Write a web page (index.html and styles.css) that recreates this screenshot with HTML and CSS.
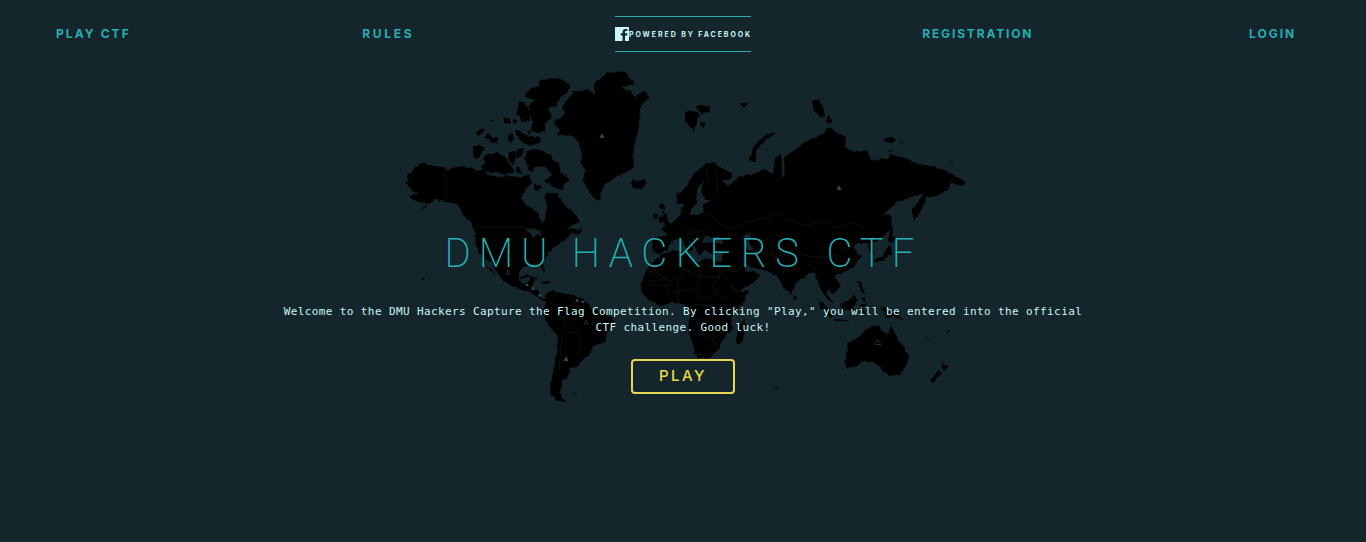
FILE: index.html
```html
<!DOCTYPE html>
<html lang="en">
<head>
<meta charset="utf-8">
<title>DMU Hackers CTF</title>
<link rel="stylesheet" href="styles.css">
</head>
<body>
<div class="page">
  <nav class="nav">
    <a class="nav-link nav-play">Play CTF</a>
    <a class="nav-link nav-rules">Rules</a>
    <a class="brand">
      <svg class="brand-icon" viewBox="0 0 14 14"><path fill="#c9f7f5" d="M0 0h14v14H0z"/><path fill="#14252b" d="M7.600 14V8.500H5.800V6.200h1.800V5C7.600 3 8.800 2 10.600 2h1.800v2.100h-1.200c-.9 0-1.200.4-1.200 1.100v1h2.400l-.3 2.300H10V14z"/></svg>
      <span class="brand-text">Powered by Facebook</span>
    </a>
    <a class="nav-link nav-reg">Registration</a>
    <a class="nav-link nav-login">Login</a>
  </nav>
  <main class="hero">
    <svg class="map" viewBox="396 64 580 346">
      <defs>
        <filter id="coast" x="-2%" y="-2%" width="104%" height="104%" color-interpolation-filters="sRGB">
          <feTurbulence type="fractalNoise" baseFrequency=".2" numOctaves="2" seed="4" result="n"/>
          <feDisplacementMap in="SourceGraphic" in2="n" scale="3.500" xChannelSelector="R" yChannelSelector="G"/>
        </filter>
      </defs>
      <g class="land" filter="url(#coast)">
        <!-- North and Central America -->
        <path d="M405 183l4-3-2-5 4-3 4-5 7-4 6 2 8 1 7 2 7 2 5-3 8-1 9 2 5 3 7 0 5 4 9 2 11-1 11 1 9-3 3 9-6 5-4 7 1 8 7 4 8 6 3 9 4-2 2-13-2-12 3-3 8 1 4 6 5 6 9 8 6 9-8 3-8 5 8-2 6 2 5-2-4 6-7-1-6 6-8 6-7 5-3 4-5 7 2 9-2 2-3-6-8-1-9 2-4 5v8l3 4 6-1 2-5 5-1-2 8-2 4 7 2 1 6 6 2 6 3-8-1-7-5-10-5-12-4-10-6-7-9-6-9-8-6 8 13 5 6-5-4-7-11-4-7-4-8-1-14-5-10-6-6-5-11-12-4-13-2-10 9-12 9 9-7 6-7-10-1-8-5 8-4-5-3z"/>
        <!-- Canadian Arctic -->
        <path d="M526 93l5-4 8-3 1-6 10-2 11 1 9 6-3 8-7 4-3 9-8 3 3 9-7 5v9l-8 1-6-3 2-9-3-7-1-10 6-4-8-2zM519 101l6 2 3 5 3 5-2 8-6 1-6-10zM475 134l7-6 3 2-6 6zM483 138l5-4 5 3 6 0v5l-6 1-3-3zM503 117l7 2v5l-5-1zM507 136l5-3 2 6-3 4-4-4zM515 130l7 3 7 3h9l4 4-4 4-11 1-7-5-3-6zM513 119l3 1v4l-4-1zM491 119h3v2h-4zM473 147l6-2 6 3-3 6-6 6-3-5zM483 157l5-3 10-1 6 4 5 5 5 9-8 4-11-3-12-1-2-4 5-4zM509 152l6-1 1 7-3 7-5-7zM517 149l7-1-2 8-5 3-1-6zM528 151l6-2 7 1 5 3 6 2 2 6 5 3 1 7 6 5 4 5-5 1-2 8-8-2-7-5-6-2 7-2 2-5-4-6-8-3-6 3-5-2-4-8zM517 167l3 0 1 7-4-2zM534 184l6 1 1 4-7 1zM529 166l5 3-1 4-5-4zM527 130l4 2-2 3z"/>
        <!-- Greenland and Iceland -->
        <path d="M553 122L565 114L562 107L573 92L587 89L595 95L594 84L607 73L625 72L635 84L620 88L632 91L634 97L645 91L649 97L640 107L639 127L634 147L633 163L635 167L616 177L604 185L600 200L592 197L583 180L585 170L580 160L583 156L578 141L572 136L557 135L560 130zM630 183l3-4 5 2 7-2 2 5-6 5-7-1z"/>
        <!-- South America and the Caribbean -->
        <path d="M545 295L553 290L562 293L574 295L588 303L592 309L612 317L614 323L607 333L605 342L593 346L590 354L580 362L577 367L570 368L569 374L563 380L560 390L562 398L567 402L557 401L550 393L551 383L553 373L557 353L558 336L547 323L542 313L546 303z"/>
        <path d="M572 394l5-1-1 2zM518 278l7-3 9 2 5 4-10-3zM540 282l6-1 5 2-7 1z"/>
        <!-- Africa -->
        <path d="M662 254L673 251L688 251L689 258L699 263L704 258L721 262L722 269L727 279L736 292L749 290L744 302L731 317L732 330L722 340L719 349L710 357L697 359L692 342L688 330L690 314L684 304L672 303L660 306L648 300L641 291L642 278L652 263zM740 324l5-5 1 7-4 17-5 2-1-8z"/>
        <!-- Eurasia -->
        <path d="M713 162L720 167L731 173L732 178L722 181L727 186L733 183L738 177L753 174L765 169L773 175L775 158L781 154L782 170L780 178L785 174L784 157L795 150L805 141L823 134L829 127L835 132L846 137L845 148L855 152L867 150L871 160L888 159L889 154L905 158L917 164L937 167L952 174L966 182L963 186L951 183L948 190L934 197L927 197L922 209L914 221L912 210L924 193L913 197L898 202L884 213L890 215L892 227L881 239L872 243L874 255L869 251L868 243L857 243L854 248L861 257L854 267L842 273L834 276L841 285L838 290L833 295L828 288L827 294L834 303L828 300L820 288L815 273L808 273L796 283L791 295L786 291L777 276L767 271L752 267L742 262L747 272L753 271L761 276L748 286L737 292L728 280L720 266L723 252L714 255L704 251L699 256L695 247L688 239L693 249L688 251L681 239L673 240L666 250L658 254L652 250L653 237L667 236L662 228L666 223L674 222L681 214L680 208L685 205L687 213L697 215L703 212L704 204L712 200L705 200L702 193L704 182L697 189L696 203L689 216L683 203L677 204L676 195L687 187L692 175L706 164z"/>
        <path d="M658 222l2-5 4-1-1-7-4-1 1-5 4 3 2 10 3 5-2 3zM653 219l0-5 5-1-1 6z"/>
        <!-- Arctic islands -->
        <path d="M685 112l7-2 7 4-2 8-3 9-5-5-4-6zM696 106l6-1 7 2 1 4-7 3-5-3zM701 122l4 1-1 4-4-1zM740 103l8 0-4 5zM812 101l6-2 5 9 2 8-5 2-6-7zM825 121l4-5 4 6-6 2zM749 160l3-11 8-10 13-7 2 2-12 8-7 9 0 12zM884 138l7-2 5 4-4 3-8-1zM898 141l5 1-1 2zM888 150l4 0-1 2zM949 162l5-1-1 2z"/>
        <!-- Asian islands -->
        <path d="M890 217l3 12-1 12-3-8zM889 235l8 3-6 6-3-3zM890 244l1 10-5 5-10 3-3-1 9-5 5-8zM793 295l3 2-1 3-3-1zM817 299l8 6 9 10-3 3-9-9zM833 319l12 1 6 2-15-1zM840 304l9-4 6-5 2 5-5 11-10-1zM860 305l8-2-5 4 2 7-4-1zM858 281l3 1 4 13-4-4zM861 298l5-1-1 5zM880 307l7 2 8 2 5 5 2 4-8-3-7 0z"/>
        <!-- Oceania -->
        <path d="M848 343l7-4 6-3 4-6 8-4 7-1 1 5 7 5 3-10 4 8 4 8 6 8 4 8-4 11-7 7-8 1-6-5-5-5-6-4-9-1-8 5-9 3-2-7zM896 371l6 0-3 6zM941 360l3 6 5 0-4 5-4-4zM930 380l9-10 3 3-9 10z"/>
        <path d="M925 338l5 1-2 1zM774 387l6 1-4 1zM945 333l4-3 0 2zM422 278l4 1-3 1z"/>
      </g>
      <!-- Inland water -->
      <g class="water">
        <path d="M525 230l8-2 7 3 2 6-4-3-5 4-3-5zM702 242l4-7 6 3 5-2 6 5-1 3-10-2-8 1zM743 236l7-3 1 5-2 4 4 7-4 2-4-6z"/>
      </g>
      <!-- Country borders -->
      <g class="borders">
        <path d="M446 168v31M474 227h50l10 4M490 258l8 4 10 1 9 9M654 264l-7 8 10 0 12 10 13-7v-18M669 276l-12 5-10 0M682 268l18 9 2-17M700 277l20 0M720 263v14l-8 8 8 10 10 5M700 277l-5 12 7 10 16-4M695 289l-16 2-2 9M679 278l-2 13-9 3-1-9-16 0M695 304l17 2 8 7M691 319l12 1 12 4-2 12 8 2M692 334l16 2 8 7-9 7-3 5-8-1M707 168l1 16M715 168l2 13 1 14M704 213l9 4 7 7 13 6M683 221l5 9 11 2 10-4M677 229l7 5 11-1M730 229l15-7 20-4 11-4 14 6 15 5 20-3 12 6 15-6 12 7 11 10M750 239l13 2 14-6 12 5 14 15 18 3 16-3 15-8M770 240l3 16 13 9-3 10M760 252l15 5M550 301l11 6-5 8 9 3-1 10 10 0M573 297l-1 10 8 3M568 333l9-1 5 9-3 8M562 335l-3 36M806 263l9 5-4 6M726 269l8 3 8-5"/>
      </g>
      <g class="outline-pins">
        <path d="M875 344.500l3-5 3 5zM506 274l2-4 2 4zM584 324l2-4 2 4z"/>
      </g>
      <g class="pins">
        <path d="M599.500 138l2.500-5 2.500 5zM836.500 190l2.500-5 2.500 5zM563.500 361l2.500-5 2.500 5zM525 286l2-3 2 3zM531 290l2-4 2 4zM538 296l2-3 2 3zM575 302l2-4 2 4zM581 303l2-3 2 3z"/>
      </g>
    </svg>
    <div class="intro">
      <h1 class="title"><span class="word w1">DMU</span><span class="word w2">HACKERS</span><span class="word w3">CTF</span></h1>
      <p class="lead">Welcome to the DMU Hackers Capture the Flag Competition. By clicking "Play," you will be entered into the official CTF challenge. Good luck!</p>
      <a class="play">Play</a>
    </div>
  </main>
</div>
</body>
</html>
```
FILE: styles.css
```css
* { box-sizing: border-box; }
body {
  margin: 0;
  background: #14252b;
  color: #c9f7f5;
  font-family: Inter, Roboto, sans-serif;
  overflow: hidden;
}
.page { height: 542px; overflow: hidden; }
.nav {
  display: grid;
  grid-template-columns: repeat(5, 1fr);
  justify-items: center;
  align-items: center;
  height: 64px;
  margin: 0 -54px;
  padding-top: 4px;
}
.nav-link {
  color: #26aeb3;
  font-size: 12px;
  font-weight: 700;
  line-height: 16px;
  text-transform: uppercase;
  white-space: nowrap;
}
.nav-play { letter-spacing: 2.1px; }
.nav-rules { letter-spacing: 2.7px; }
.nav-reg { letter-spacing: 1.85px; }
.nav-login { letter-spacing: 2px; }
.brand {
  display: flex;
  align-items: center;
  width: 136px;
  height: 36px;
  border-top: 1px solid #26aeb3;
  border-bottom: 1px solid #26aeb3;
}
.brand-icon { width: 14px; height: 14px; flex: none; }
.brand-text {
  font-size: 7px;
  font-weight: 700;
  letter-spacing: 1.92px;
  text-transform: uppercase;
  white-space: nowrap;
}
.hero { display: grid; height: 478px; }
.map {
  grid-area: 1 / 1;
  width: 580px;
  height: 346px;
  margin-left: 396px;
}
.land { fill: #000; }
.water { fill: #14252b; }
.borders { fill: none; stroke: #0e191d; stroke-width: .7; }
.outline-pins { fill: none; stroke: #303b3e; stroke-width: .7; }
.pins { fill: #264b52; }
.intro {
  grid-area: 1 / 1;
  z-index: 1;
  display: flex;
  flex-direction: column;
  align-items: center;
  padding-top: 166px;
}
.title {
  display: flex;
  justify-content: space-between;
  width: 470px;
  height: 48px;
  margin: 0 7px 0 0;
  color: #26b0b5;
  font-family: Roboto, Inter, sans-serif;
  font-size: 40px;
  font-weight: 200;
  line-height: 47px;
}
.word { white-space: nowrap; }
.w1 { letter-spacing: 8px; }
.w2 { margin-left: -3px; letter-spacing: 8.5px; }
.w3 { letter-spacing: 8px; margin-right: -8px; }
.lead {
  width: 820px;
  margin: 26px 0 0;
  font-family: "DejaVu Sans Mono", monospace;
  font-size: 11px;
  letter-spacing: .38px;
  line-height: 16px;
  text-align: center;
}
.play {
  width: 104px;
  height: 35px;
  margin-top: 23px;
  border: 2px solid #e8d653;
  border-radius: 4px;
  color: #e8dc45;
  font-size: 15px;
  font-weight: 500;
  letter-spacing: 2.5px;
  line-height: 30px;
  text-align: center;
  text-transform: uppercase;
}
```
